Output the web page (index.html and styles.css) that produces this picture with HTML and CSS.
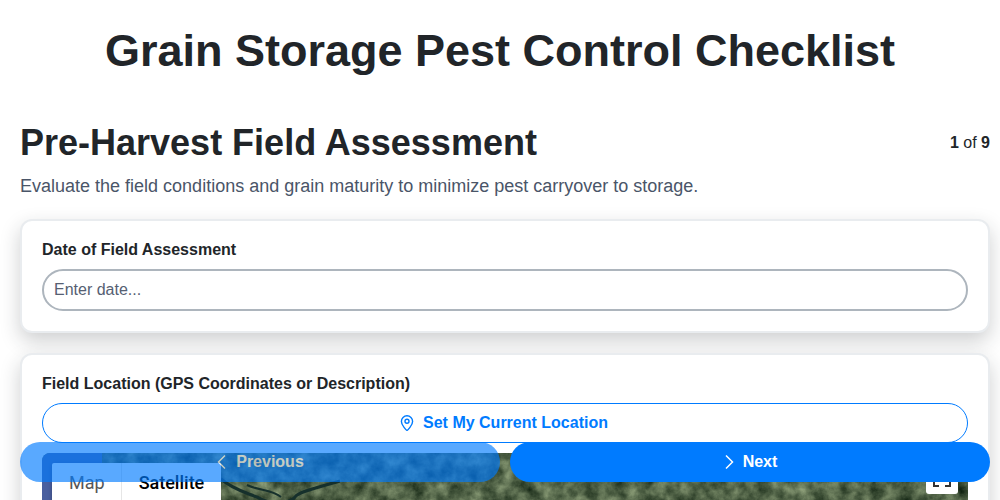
FILE: index.html
```html
<!DOCTYPE html>
<html lang="en">
<head>
  <meta charset="UTF-8" />
  <meta name="viewport" content="width=device-width, initial-scale=1.0"/>
  <title>Grain Storage Pest Control Checklist</title>
  <link rel="stylesheet" href="styles.css">
</head>
<body>
  <h1 class="page-title">Grain Storage Pest Control Checklist</h1>

  <main class="section">
    <div class="section-head">
      <h2>Pre-Harvest Field Assessment</h2>
      <span class="step-count"><b>1</b> of <b>9</b></span>
    </div>
    <p class="section-desc">Evaluate the field conditions and grain maturity to minimize pest carryover to storage.</p>

    <div class="card">
      <label class="field-label" for="date">Date of Field Assessment</label>
      <input class="text-input" id="date" type="text" placeholder="Enter date...">
    </div>

    <div class="card">
      <div class="field-label">Field Location (GPS Coordinates or Description)</div>
      <button class="location-btn">
        <svg width="16" height="16" viewBox="0 0 16 16" fill="none" stroke="currentColor" stroke-width="1.4">
          <path d="M8 15.4c-.4 0-5.600-5.100-5.600-9a5.600 5.600 0 0 1 11.200 0c0 3.900-5.200 9-5.600 9z"/>
          <circle cx="8" cy="6.300" r="2"/>
        </svg>
        Set My Current Location
      </button>

      <div class="map">
        <svg class="map-image" width="100%" height="100%">
          <filter id="land" x="0" y="0" width="100%" height="100%" color-interpolation-filters="sRGB">
            <feTurbulence type="fractalNoise" baseFrequency="0.07" numOctaves="5" seed="11"/>
            <feColorMatrix type="matrix" values="0 0 0 0.6 0.02  0 0 0 0.6 0.09  0 0 0 0.5 0.03  0 0 0 0 1"/>
          </filter>
          <rect width="100%" height="100%" filter="url(#land)"/>
          <rect class="water" width="60" height="300"/>
          <path class="river" d="M179 26c14 12 28 14 40 20s30 4 34-2 26-10 45-16"/>
          <path class="river thin" d="M205 32c12 6 24 4 34 12"/>
        </svg>
        <div class="map-types">
          <span class="map-type">Map</span>
          <span class="map-type active">Satellite</span>
        </div>
        <button class="fullscreen-btn" aria-label="Toggle fullscreen">
          <svg width="18" height="18" viewBox="0 0 18 18" fill="none" stroke="#333" stroke-width="2">
            <path d="M1 6V1h5M12 1h5v5M17 12v5h-5M6 17H1v-5"/>
          </svg>
        </button>
      </div>
    </div>
  </main>

  <nav class="step-nav">
    <button class="nav-btn prev">
      <svg width="16" height="16" viewBox="0 0 16 16" fill="none" stroke="currentColor" stroke-width="1.5"><path d="M11 1.500 4.500 8l6.500 6.500"/></svg>
      Previous
    </button>
    <button class="nav-btn">
      <svg width="16" height="16" viewBox="0 0 16 16" fill="none" stroke="currentColor" stroke-width="1.5"><path d="M5 1.500 11.500 8 5 14.500"/></svg>
      Next
    </button>
  </nav>
</body>
</html>
```

FILE: styles.css
```css
* {
  box-sizing: border-box;
}

html {
  overflow: hidden;
}

body {
  margin: 0;
  height: 500px;
  overflow: hidden;
  background: white;
  color: #212529;
  font-family: "Liberation Sans", Arial, sans-serif;
}

.page-title {
  margin: 0;
  padding: 21px 0 40px;
  font-size: 45px;
  line-height: 60px;
  text-align: center;
}

.section {
  padding: 0 10px 0 20px;
}

.section-head {
  display: flex;
  align-items: center;
  justify-content: space-between;
}

.section-head h2 {
  margin: 0;
  font-size: 36px;
  line-height: 43px;
}

.step-count {
  font-size: 16px;
}

.section-desc {
  margin: 11px 0 22px;
  color: #4a5568;
  font-size: 18px;
  line-height: 22px;
}

.card {
  margin-bottom: 20px;
  padding: 19px 20px 20px;
  background: white;
  border: 2px solid #e9ecef;
  border-radius: 12px;
  box-shadow: 0 8px 20px rgba(33, 37, 41, 0.22);
}

.field-label {
  display: block;
  margin-bottom: 9px;
  font-size: 16px;
  font-weight: bold;
  line-height: 20px;
}

.text-input {
  display: block;
  width: 100%;
  height: 42px;
  padding: 0 10px;
  border: 2px solid #adb5bd;
  border-radius: 21px;
  color: #212529;
  font-family: inherit;
  font-size: 16px;
  outline: none;
}

.text-input::placeholder {
  color: #566072;
  opacity: 1;
}

.location-btn {
  display: flex;
  align-items: center;
  justify-content: center;
  gap: 8px;
  width: 100%;
  height: 40px;
  padding: 0 3px 0 0;
  background: white;
  border: 1px solid #007bff;
  border-radius: 20px;
  color: #007bff;
  font-family: inherit;
  font-size: 16px;
  font-weight: bold;
}

.map {
  position: relative;
  height: 300px;
  margin-top: 10px;
  overflow: hidden;
  border-radius: 8px;
}

.map-image {
  display: block;
}

.water {
  fill: #4a5f9f;
}

.river {
  fill: none;
  stroke: #16302c;
  stroke-width: 3;
}

.river.thin {
  stroke-width: 2;
}

.map-types {
  position: absolute;
  top: 10px;
  left: 10px;
  display: flex;
  background: white;
  border-radius: 2px;
  box-shadow: 0 1px 4px rgba(0, 0, 0, 0.3);
  font-family: Roboto, sans-serif;
  font-size: 18px;
}

.map-type {
  display: block;
  height: 40px;
  padding: 0 16px 0 17px;
  color: #565656;
  line-height: 40px;
}

.map-type.active {
  padding-right: 17px;
  border-left: 1px solid #e6e6e6;
  color: black;
  font-weight: 500;
}

.fullscreen-btn {
  position: absolute;
  top: 9px;
  right: 10px;
  display: flex;
  align-items: center;
  justify-content: center;
  width: 32px;
  height: 32px;
  padding: 0;
  background: white;
  border: none;
  border-radius: 3px;
}

.step-nav {
  position: fixed;
  left: 20px;
  right: 10px;
  bottom: 18px;
  display: flex;
  gap: 10px;
}

.nav-btn {
  flex: 1;
  display: flex;
  align-items: center;
  justify-content: center;
  gap: 6px;
  height: 40px;
  padding: 0;
  background: #007bff;
  border: none;
  border-radius: 20px;
  color: white;
  font-family: inherit;
  font-size: 16px;
  font-weight: bold;
}

.nav-btn svg {
  margin-left: -2px;
}

.nav-btn.prev {
  opacity: 0.65;
}
```
